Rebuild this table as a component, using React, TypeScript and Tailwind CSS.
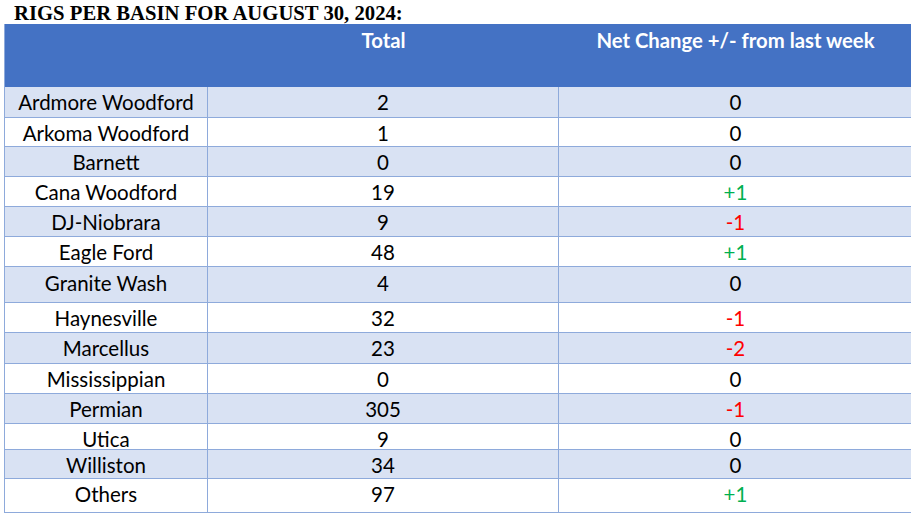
const ROWS = [
  { name: "Ardmore Woodford", total: "2", change: "0", h: "h-[30px]" },
  { name: "Arkoma Woodford", total: "1", change: "0", h: "h-[29px]" },
  { name: "Barnett", total: "0", change: "0", h: "h-[30px]" },
  { name: "Cana Woodford", total: "19", change: "+1", h: "h-[30px]" },
  { name: "DJ-Niobrara", total: "9", change: "-1", h: "h-[30px]" },
  { name: "Eagle Ford", total: "48", change: "+1", h: "h-[30px]" },
  { name: "Granite Wash", total: "4", change: "0", h: "h-[36px]" },
  { name: "Haynesville", total: "32", change: "-1", h: "h-[30px]" },
  { name: "Marcellus", total: "23", change: "-2", h: "h-[31px]" },
  { name: "Mississippian", total: "0", change: "0", h: "h-[30px]" },
  { name: "Permian", total: "305", change: "-1", h: "h-[30px]" },
  { name: "Utica", total: "9", change: "0", h: "h-[26px]" },
  { name: "Williston", total: "34", change: "0", h: "h-[29px]" },
  { name: "Others", total: "97", change: "+1", h: "h-[34px] pb-[8px]" },
];

function changeColor(v: string) {
  if (v.startsWith("+")) return "text-[#00b050]";
  if (v.startsWith("-")) return "text-[#ff0000]";
  return "text-black";
}

export default function App() {
  return (
    <div className="w-[913px] h-[517px] bg-white overflow-hidden font-['Lato',sans-serif]">
      <h1 className="pl-[14px] h-[24px] text-[20.7px] leading-[26px] font-bold text-black font-['Liberation_Serif',serif]">
        RIGS PER BASIN FOR AUGUST 30, 2024:
      </h1>

      <div className="ml-[4px] w-[907px] border-l border-b border-[#8eaadb]">
        {/* header */}
        <div className="grid grid-cols-[203px_351px_353px] h-[63px] bg-[#4472c4] text-white font-bold text-[20.3px]">
          <div />
          <div className="pt-[1px] text-center">Total</div>
          <div className="pt-[1px] text-center">Net Change +/- from last week</div>
        </div>

        {ROWS.map((row, i) => (
          <div
            key={row.name}
            className={`grid grid-cols-[203px_351px_353px] ${row.h} text-[20.5px] text-black ${
              i % 2 === 0 ? "bg-[#d9e2f3]" : "bg-white"
            } ${i > 0 ? "border-t border-[#8eaadb]" : ""}`}
          >
            <div className="flex items-center justify-center pb-[2px] border-r border-[#8eaadb]">
              {row.name}
            </div>
            <div className="flex items-center justify-center pb-[2px] border-r border-[#8eaadb]">
              {row.total}
            </div>
            <div className={`flex items-center justify-center pb-[2px] ${changeColor(row.change)}`}>
              {row.change}
            </div>
          </div>
        ))}
      </div>
    </div>
  );
}
